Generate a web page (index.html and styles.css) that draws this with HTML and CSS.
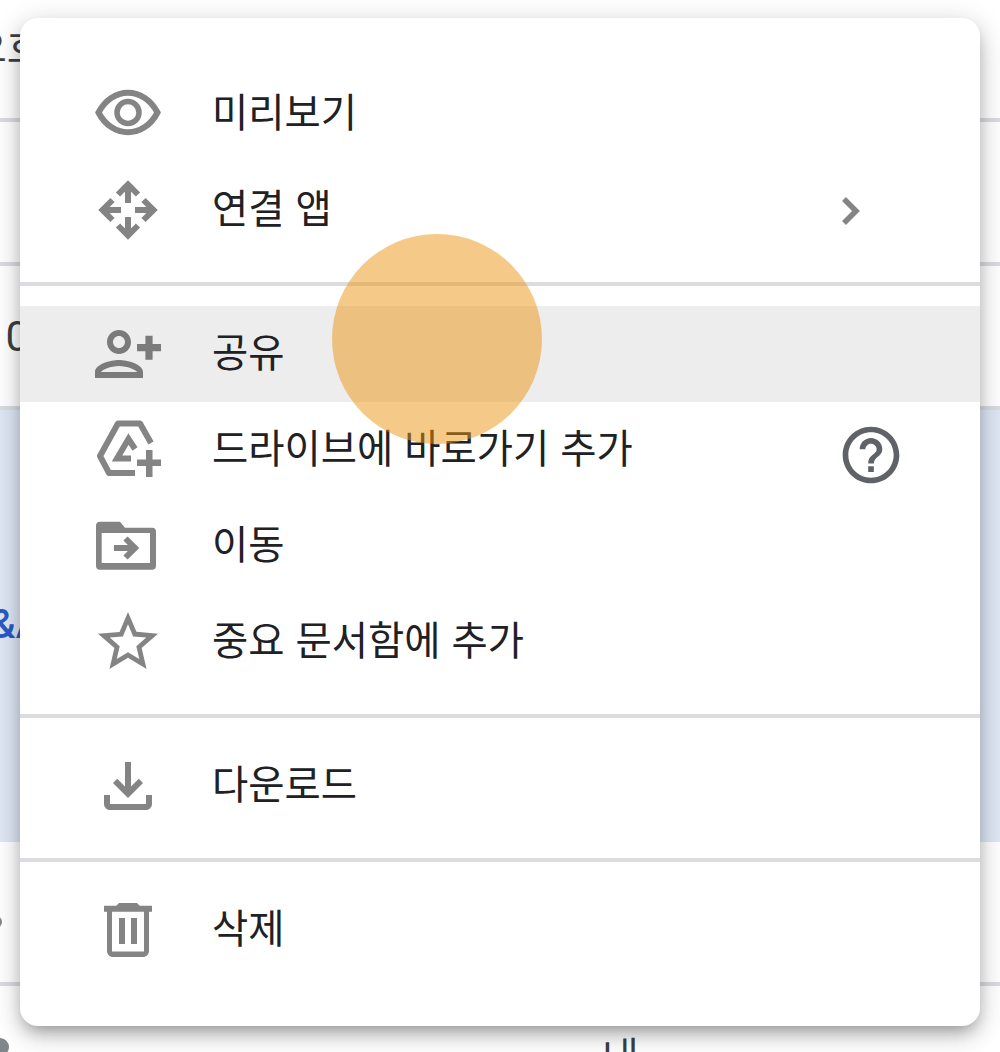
FILE: index.html
```html
<!DOCTYPE html>
<html lang="ko">
<head>
<meta charset="utf-8">
<title>메뉴</title>
<link rel="stylesheet" href="styles.css">
</head>
<body>
<div class="list">
  <div class="list-row row-a"><span class="frag frag-ko">오호</span></div>
  <div class="list-row row-b"></div>
  <div class="list-row row-b"><span class="frag frag-num">10</span></div>
  <div class="list-blue"><span class="frag frag-link">&amp;A</span></div>
  <div class="list-row row-b"><span class="dot dot-a"></span></div>
  <div class="list-last"><span class="dot dot-b"></span><span class="frag frag-bottom">내</span></div>
</div>

<div class="menu">
  <div class="group group-first">
    <div class="item">
      <svg class="icon" viewBox="0 0 72 72"><path class="line" stroke-width="6" d="M6.500 34.500C13 22 24 14.750 36 14.750S59 22 65.500 34.500C59 47 48 54.250 36 54.250S13 47 6.500 34.500Z"/><circle class="line" stroke-width="5.500" cx="36" cy="34.500" r="11"/></svg>
      <span class="label">미리보기</span>
    </div>
    <div class="item">
      <svg class="icon" viewBox="0 0 72 72"><path class="line" stroke-width="6" d="M26 20.500 36 10.500 46 20.500M36 13V29M26 51.500 36 61.500 46 51.500M36 59V43M20.500 26 10.500 36 20.500 46M13 36H29M51.500 26 61.500 36 51.500 46M59 36H43"/></svg>
      <span class="label">연결 앱</span>
      <svg class="chevron" viewBox="0 0 24 32"><path class="line" stroke-width="5.500" d="M4 3 16 15 4 27"/></svg>
    </div>
  </div>
  <div class="group">
    <div class="item item-hover">
      <svg class="icon" viewBox="0 0 24 24"><path class="solid" transform="matrix(-1 0 0 1 24 0)" d="M15 12c2.210 0 4-1.790 4-4s-1.790-4-4-4-4 1.790-4 4 1.790 4 4 4zm0-6c1.100 0 2 .9 2 2s-.9 2-2 2-2-.9-2-2 .9-2 2-2zm0 8c-2.670 0-8 1.340-8 4v2h16v-2c0-2.660-5.330-4-8-4zm-6 4c.22-.72 3.310-2 6-2 2.700 0 5.800 1.290 6 2H9zM3.800 13.900V11.100H1V8.700H3.800V5.900H6.200V8.700H9V11.100H6.200V13.900Z"/></svg>
      <span class="label">공유</span>
    </div>
    <div class="item">
      <svg class="icon" viewBox="0 0 72 72"><path class="line" stroke-width="6" stroke-linejoin="round" d="M59 29 48 9.500H26L8 42 17 59H43"/><path class="line" stroke-width="6" d="M43 35 36.500 25 25 44.500H39"/><path class="solid" d="M54 36h6.500v9.500h8.500v6.500h-8.500V63H54V52H45v-6.500h9z"/></svg>
      <span class="label">드라이브에 바로가기 추가</span>
      <svg class="help" viewBox="0 0 24 24"><path d="M11 18h2v-2h-2v2zm1-16C6.480 2 2 6.480 2 12s4.480 10 10 10 10-4.480 10-10S17.520 2 12 2zm0 18c-4.410 0-8-3.590-8-8s3.590-8 8-8 8 3.590 8 8-3.590 8-8 8zm0-14c-2.210 0-4 1.790-4 4h2c0-1.100.9-2 2-2s2 .9 2 2c0 2-3 1.750-3 5h2c0-2.250 3-2.500 3-5 0-2.210-1.790-4-4-4z"/></svg>
    </div>
    <div class="item">
      <svg class="icon" viewBox="0 0 72 72"><path class="solid" fill-rule="evenodd" d="M8 11.700H28L33 17.700H60Q64 17.700 64 21.700V55.700Q64 59.700 60 59.700H8Q4 59.700 4 55.700V15.700Q4 11.700 8 11.700ZM9.700 23V53H58V23Z"/><path class="line" stroke-width="6" d="M22 38H42M33.500 28.500 43 38 33.500 47.500"/></svg>
      <span class="label">이동</span>
    </div>
    <div class="item">
      <svg class="icon" viewBox="0 0 24 24"><path class="solid" d="M22 9.240l-7.190-.62L12 2 9.190 8.630 2 9.240l5.460 4.730L5.820 21 12 17.270 18.180 21l-1.630-7.030L22 9.240zM12 15.400l-3.760 2.270 1-4.280-3.320-2.880 4.380-.38L12 6.100l1.710 4.040 4.380.38-3.320 2.880 1 4.280L12 15.400z"/></svg>
      <span class="label">중요 문서함에 추가</span>
    </div>
  </div>
  <div class="group">
    <div class="item">
      <svg class="icon" viewBox="0 0 24 24"><path class="solid" d="M18 15v3H6v-3H4v3c0 1.100.9 2 2 2h12c1.100 0 2-.9 2-2v-3h-2zm-1-4l-1.410-1.410L13 12.170V4h-2v8.170L8.410 9.590 7 11l5 5 5-5z"/></svg>
      <span class="label">다운로드</span>
    </div>
  </div>
  <div class="group group-last">
    <div class="item">
      <svg class="icon" viewBox="0 0 24 24"><path class="solid" fill-rule="evenodd" d="M9 3h6l.9.9H20v2H4v-2h4.100zM5 5.900h14V19c0 1.100-.9 2-2 2H7c-1.100 0-2-.9-2-2zM6.670 5.900V19.200H17.330V5.900zM9 8h2v8.700H9zM13 8h2v8.700h-2z"/></svg>
      <span class="label">삭제</span>
    </div>
  </div>
  <div class="touch"></div>
</div>
</body>
</html>
```

FILE: styles.css
```css
* { box-sizing: border-box; }

html, body {
  margin: 0;
  height: 1052px;
  overflow: hidden;
  background: #fff;
}

body {
  position: relative;
  font-family: "Noto Sans CJK KR", "Noto Sans", sans-serif;
  color: #202124;
}

.list-row {
  display: flex;
  align-items: center;
  border-bottom: 4px solid #dadce0;
}

.row-a { height: 122px; }
.row-b { height: 144px; }

.list-blue {
  display: flex;
  align-items: center;
  height: 432px;
  background: #dfe7f5;
}

.list-last {
  display: flex;
  align-items: flex-start;
  height: 66px;
}

.frag {
  white-space: nowrap;
  line-height: 1;
}

.frag-ko {
  margin: -28px 0 0 -30px;
  font-size: 40px;
  color: #3c4043;
}

.frag-num {
  margin: 2px 0 0 -18px;
  font-family: Roboto, sans-serif;
  font-size: 42px;
  color: #3c4043;
}

.frag-link {
  margin: -2px 0 0 -10px;
  font-family: Roboto, sans-serif;
  font-weight: 500;
  font-size: 40px;
  color: #2a5bc8;
}

.frag-bottom {
  margin: 0 0 0 593px;
  padding-top: 48px;
  font-size: 40px;
  color: #3c4043;
}

.dot {
  display: block;
  flex: none;
  border-radius: 50%;
  background: #80868b;
}

.dot-a {
  width: 12px;
  height: 12px;
  margin: 20px 0 0 -10px;
}

.dot-b {
  width: 18px;
  height: 18px;
  margin: 52px 0 0 -9px;
}

.menu {
  position: absolute;
  left: 20px;
  top: 18px;
  width: 960px;
  height: 1008px;
  padding: 48px 0;
  background: #fff;
  border-radius: 18px;
  box-shadow:
    0 12px 24px 0 rgba(0, 0, 0, .12),
    0 4px 28px 2px rgba(0, 0, 0, .12),
    0 8px 16px -6px rgba(0, 0, 0, .32);
}

.group {
  padding: 20px 0 24px;
  border-bottom: 4px solid #dadce0;
}

.group-first { padding-top: 0; }
.group-last { padding-bottom: 0; border-bottom: 0; }

.item {
  display: flex;
  align-items: center;
  gap: 48px;
  height: 96px;
  padding-left: 72px;
  padding-right: 75px;
}

.item-hover { background: #ededed; }

.icon {
  flex: none;
  width: 72px;
  height: 72px;
  opacity: .48;
}

.line {
  fill: none;
  stroke: #000;
  stroke-linecap: butt;
}

.solid { fill: #000; }

.label {
  font-size: 39.400px;
  line-height: 48px;
  margin-top: -8px;
  white-space: nowrap;
}

.chevron {
  flex: none;
  width: 24px;
  height: 32px;
  margin-left: auto;
  margin-right: 41px;
  margin-top: 3px;
  opacity: .48;
}

.help {
  flex: none;
  width: 68px;
  height: 68px;
  margin-left: auto;
  margin-top: 10px;
  fill: #5f6368;
}

.touch {
  position: absolute;
  left: 312px;
  top: 216px;
  width: 210px;
  height: 210px;
  border-radius: 50%;
  background: rgba(236, 150, 20, .5);
}
```
